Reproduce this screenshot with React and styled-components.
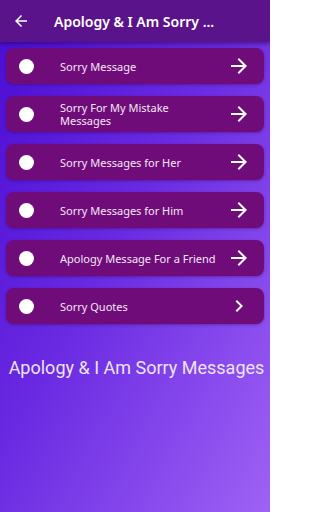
import React from 'react';
import styled, { createGlobalStyle } from 'styled-components';

const GlobalStyle = createGlobalStyle`
  html, body {
    margin: 0;
    padding: 0;
  }
  body {
    font-family: "Noto Sans", "Open Sans", sans-serif;
  }
`;

// labels carry their own break where the app's fixed-width text view wraps
const items = [
    { label: 'Sorry Message', icon: 'arrow' },
    { label: 'Sorry For My Mistake\nMessages', icon: 'arrow' },
    { label: 'Sorry Messages for Her', icon: 'arrow' },
    { label: 'Sorry Messages for Him', icon: 'arrow' },
    { label: 'Apology Message For a Friend', icon: 'arrow' },
    { label: 'Sorry Quotes', icon: 'chevron' },
];

function Icon({ d }) {
    return (
        <svg width="24" height="24" viewBox="0 0 24 24" fill="#ffffff">
            <path d={d} />
        </svg>
    );
}

const ARROW_BACK = 'M20 11H7.83l5.59-5.59L12 4l-8 8 8 8 1.41-1.41L7.83 13H20v-2z';
const ARROW_FORWARD = 'M12 4l-1.41 1.41L16.17 11H4v2h12.17l-5.58 5.59L12 20l8-8z';
const CHEVRON_RIGHT = 'M10 6L8.59 7.41 13.17 12l-4.58 4.59L10 18l6-6z';

export default function App() {
    return (
        <Screen>
            <GlobalStyle />
            <TopBar>
                <BackButton>
                    <Icon d={ARROW_BACK} />
                </BackButton>
                <Title>Apology &amp; I Am Sorry ...</Title>
            </TopBar>
            <MenuList>
                {items.map(item => (
                    <Card key={item.label}>
                        <Dot />
                        <Label>{item.label}</Label>
                        <Trailing>
                            <Icon d={item.icon === 'chevron' ? CHEVRON_RIGHT : ARROW_FORWARD} />
                        </Trailing>
                    </Card>
                ))}
            </MenuList>
            <Footer>Apology &amp; I Am Sorry Messages</Footer>
        </Screen>
    );
}

const Screen = styled.div`
    width: 270px;
    height: 512px;
    overflow: hidden;
    display: flex;
    flex-direction: column;
    background: linear-gradient(118deg, #4a0bd3 0%, #6a2ae2 45%, #9e62f5 100%);
`;

const TopBar = styled.header`
    height: 42px;
    flex-shrink: 0;
    display: flex;
    align-items: center;
    background: #5a138b;
    box-shadow: 0 2px 4px rgba(20, 0, 60, 0.45);
    position: relative;
    z-index: 1;
`;

const BackButton = styled.div`
    width: 18px;
    height: 18px;
    margin-left: 12px;
    display: flex;

    svg {
        width: 18px;
        height: 18px;
    }
`;

const Title = styled.h1`
    margin: 0 0 0 24px;
    font-size: 14px;
    font-weight: 600;
    color: #ffffff;
    white-space: nowrap;
`;

const MenuList = styled.div`
    display: flex;
    flex-direction: column;
    gap: 12px;
    padding: 6px 6px 0;
`;

const Card = styled.div`
    height: 36px;
    display: flex;
    align-items: center;
    background: #700c79;
    border-radius: 8px;
    box-shadow: 0 1px 3px rgba(30, 0, 60, 0.35);
`;

const Dot = styled.span`
    width: 15px;
    height: 15px;
    border-radius: 50%;
    background: #ffffff;
    margin-left: 13px;
    flex-shrink: 0;
`;

const Label = styled.span`
    flex: 1;
    margin-left: 26px;
    font-size: 11px;
    line-height: 13px;
    color: #f3e8f6;
    white-space: pre-line;
`;

const Trailing = styled.div`
    width: 24px;
    height: 24px;
    margin-right: 13px;
    display: flex;
    flex-shrink: 0;
`;

const Footer = styled.div`
    margin-top: 33px;
    text-align: center;
    font-family: Roboto, "Liberation Sans", sans-serif;
    font-size: 18px;
    color: #ece4f6;
    padding-left: 3px;
`;
